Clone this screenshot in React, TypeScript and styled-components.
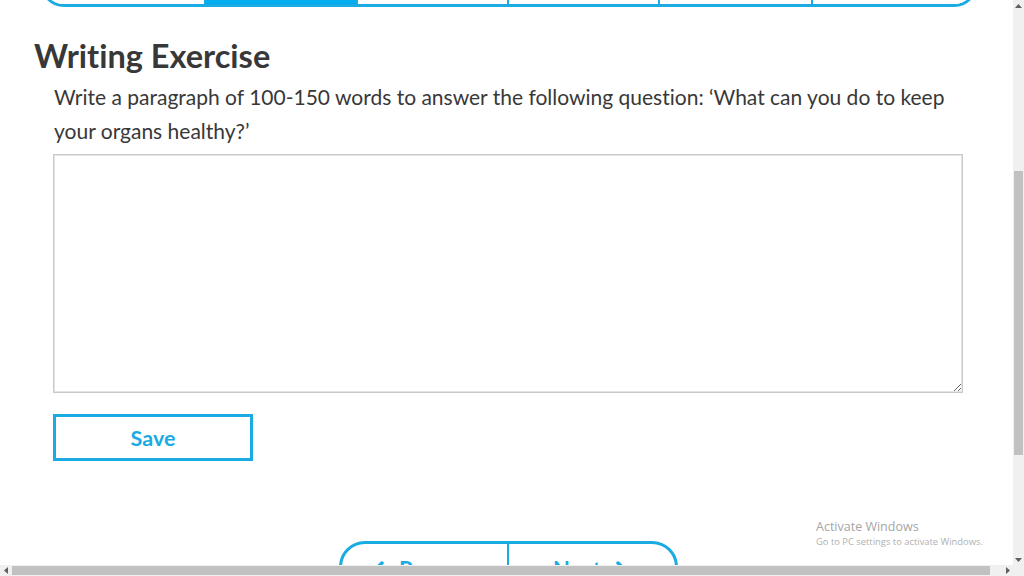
import React from "react";
import styled, { createGlobalStyle } from "styled-components";

const BLUE = "#1aabe3";

const GlobalStyle = createGlobalStyle`
  html, body { margin: 0; padding: 0; overflow: hidden; background: #fff; }
  * { box-sizing: border-box; }
`;

const Frame = styled.div`
  width: 1024px;
  height: 576px;
  display: grid;
  grid-template-columns: 1fr 11px;
  grid-template-rows: 1fr 11px;
  font-family: Lato, "Open Sans", sans-serif;
  font-variant-ligatures: none;
  color: #333;
`;

const Viewport = styled.div`
  position: relative;
  overflow: hidden;
`;

const Page = styled.div`
  display: flex;
  flex-direction: column;
`;

const TabBar = styled.nav`
  margin: -43px 35px 0 40px;
  height: 50px;
  display: grid;
  grid-template-columns: 162fr 153fr 152fr 152fr 154fr 165fr;
  border: 3px solid ${BLUE};
  border-top: none;
  border-radius: 0 0 24px 24px;
  overflow: hidden;
`;

const Tab = styled.div<{ $active?: boolean; $first?: boolean }>`
  background: ${(p) => (p.$active ? "#00aeef" : "#fff")};
  border-left: ${(p) => (p.$first ? "none" : `2px solid ${BLUE}`)};
`;

const Heading = styled.h2`
  margin: 29px 0 0 34px;
  font-size: 32.5px;
  line-height: 40px;
  font-weight: 700;
  color: #383838;
`;

const Body = styled.div`
  padding-left: 53px;
  display: flex;
  flex-direction: column;
`;

const Question = styled.p`
  margin: 4px 0 0 1px;
  font-size: 21px;
  line-height: 34px;
  color: #383838;
  width: 912px;
`;

const Answer = styled.textarea`
  margin-top: 6px;
  width: 910px;
  height: 239px;
  border: 1px solid #c8c8c8;
  box-shadow: inset 0 0 0 1px #e4e4e4;
  resize: both;
  outline: none;
  font-family: Lato, sans-serif;
  font-size: 16px;
`;

const SaveButton = styled.button`
  margin-top: 21px;
  width: 200px;
  height: 47px;
  background: #fff;
  border: 3px solid ${BLUE};
  color: ${BLUE};
  font-family: Lato, sans-serif;
  font-weight: 700;
  font-size: 21.5px;
  cursor: pointer;
`;

const Pager = styled.div`
  align-self: center;
  margin: 80px 0 0 4px;
  width: 339px;
  height: 52px;
  display: grid;
  grid-template-columns: 168fr 171fr;
  border: 3px solid ${BLUE};
  border-radius: 30px;
  overflow: hidden;
`;

const PagerButton = styled.div<{ $right?: boolean }>`
  display: flex;
  align-items: flex-start;
  gap: 15px;
  padding: 14px 0 0 ${(p) => (p.$right ? "44px" : "30px")};
  border-left: ${(p) => (p.$right ? `2px solid ${BLUE}` : "none")};
  color: ${BLUE};
  font-weight: 700;
  font-size: 22px;
  line-height: 24px;

  svg {
    margin-top: 3px;
  }
`;

const Watermark = styled.div`
  position: absolute;
  left: 816px;
  top: 519px;
  font-family: "Segoe UI", "Open Sans", "Noto Sans", sans-serif;
  color: #a6a6a6;
  pointer-events: none;
`;

const WmTitle = styled.div`
  font-size: 12.5px;
  line-height: 16px;
`;

const WmSub = styled.div`
  font-size: 9.4px;
  line-height: 14px;
  color: #b0b0b0;
`;

const VScroll = styled.div`
  background: #f0f0f0;
  display: grid;
  grid-template-rows: 11px 1fr 11px;
  justify-items: center;
`;

const HScroll = styled.div`
  background: #f0f0f0;
  display: grid;
  grid-template-columns: 11px 1fr 11px;
  align-items: center;
`;

const Corner = styled.div`
  background: #f0f0f0;
`;

const Arrow = styled.div`
  display: flex;
  align-items: center;
  justify-content: center;
  color: #606060;
`;

const VTrack = styled.div`
  padding: 160px 0 99px 1px;
  width: 100%;
  display: flex;
`;

const VThumb = styled.div`
  flex: 1;
  background: #c1c1c1;
  margin-right: 1px;
`;

const HTrack = styled.div`
  height: 100%;
  padding: 1px 12px 1px 1px;
  display: flex;
`;

const HThumb = styled.div`
  flex: 1;
  background: #c1c1c1;
`;

const Tri = ({ dir }: { dir: "up" | "down" | "left" | "right" }) => {
  const pts = {
    up: "0,4 3.5,0 7,4",
    down: "0,0 3.5,4 7,0",
    left: "4,0 0,3.5 4,7",
    right: "0,0 4,3.5 0,7",
  }[dir];
  const v = dir === "up" || dir === "down";
  return (
    <svg width={v ? 7 : 4} height={v ? 4 : 7} viewBox={v ? "0 0 7 4" : "0 0 4 7"}>
      <polygon points={pts} fill="#606060" />
    </svg>
  );
};

const Chevron = ({ left }: { left?: boolean }) => (
  <svg width="12" height="18" viewBox="0 0 12 18">
    <polyline
      points={left ? "10,2 3,9 10,16" : "2,2 9,9 2,16"}
      fill="none"
      stroke={BLUE}
      strokeWidth="3.5"
      strokeLinecap="round"
      strokeLinejoin="round"
    />
  </svg>
);

export default function App() {
  return (
    <>
      <GlobalStyle />
      <Frame>
        <Viewport>
          <Page>
            <TabBar>
              <Tab $first />
              <Tab $active />
              <Tab />
              <Tab />
              <Tab />
              <Tab />
            </TabBar>
            <Heading>Writing Exercise</Heading>
            <Body>
              <Question>
                Write a paragraph of 100-150 words to answer the following question: ‘What can you do to keep
                your organs healthy?’
              </Question>
              <Answer />
              <SaveButton>Save</SaveButton>
            </Body>
            <Pager>
              <PagerButton>
                <Chevron left />
                Prev
              </PagerButton>
              <PagerButton $right>
                Next
                <Chevron />
              </PagerButton>
            </Pager>
          </Page>
          <Watermark>
            <WmTitle>Activate Windows</WmTitle>
            <WmSub>Go to PC settings to activate Windows.</WmSub>
          </Watermark>
        </Viewport>
        <VScroll>
          <Arrow>
            <Tri dir="up" />
          </Arrow>
          <VTrack>
            <VThumb />
          </VTrack>
          <Arrow>
            <Tri dir="down" />
          </Arrow>
        </VScroll>
        <HScroll>
          <Arrow>
            <Tri dir="left" />
          </Arrow>
          <HTrack>
            <HThumb />
          </HTrack>
          <Arrow>
            <Tri dir="right" />
          </Arrow>
        </HScroll>
        <Corner />
      </Frame>
    </>
  );
}
